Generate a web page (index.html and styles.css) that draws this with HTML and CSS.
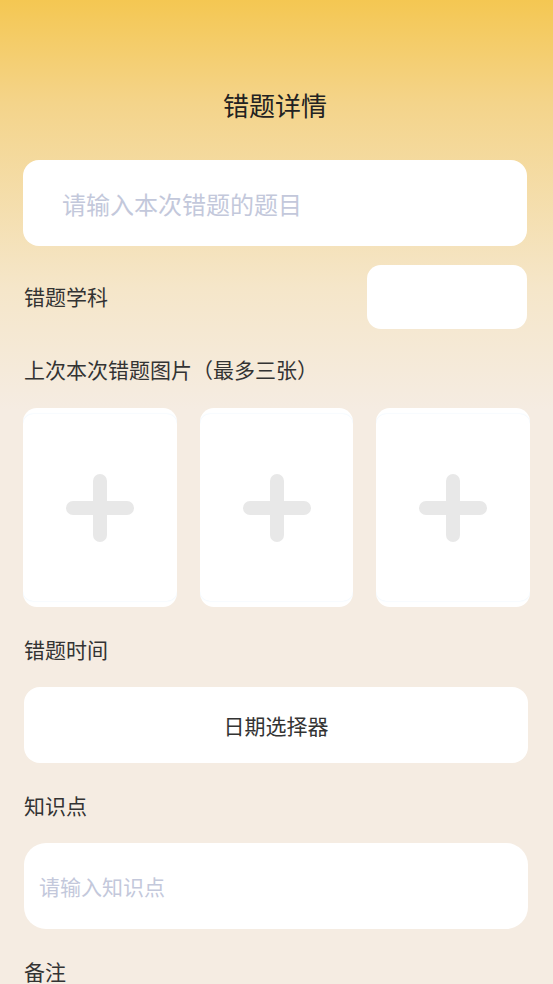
FILE: index.html
```html
<!DOCTYPE html>
<html lang="zh-CN">
<head>
  <meta charset="UTF-8">
  <meta name="viewport" content="width=device-width, initial-scale=1.0">
  <title>错题详情</title>
  <link rel="stylesheet" href="styles.css">
</head>
<body>
  <div class="page">
    <h1 class="title">错题详情</h1>

    <div class="field title-input">
      <span class="placeholder">请输入本次错题的题目</span>
    </div>

    <div class="subject-row">
      <span class="label">错题学科</span>
      <div class="subject-box"></div>
    </div>

    <div class="label section-label">上次本次错题图片（最多三张）</div>
    <div class="photos">
      <div class="photo"><div class="photo-inner"><span class="plus"></span></div></div>
      <div class="photo"><div class="photo-inner"><span class="plus"></span></div></div>
      <div class="photo"><div class="photo-inner"><span class="plus"></span></div></div>
    </div>

    <div class="label time-label">错题时间</div>
    <div class="date-picker">日期选择器</div>

    <div class="label point-label">知识点</div>
    <div class="point-input">
      <span class="placeholder small">请输入知识点</span>
    </div>

    <div class="label note-label">备注</div>
  </div>
</body>
</html>
```

FILE: styles.css
```css
html, body {
  margin: 0;
  padding: 0;
}
body {
  font-family: "Noto Sans CJK SC", "Noto Sans", sans-serif;
  color: #333;
  background: #f5ece2;
}
.page {
  min-height: 984px;
  padding: 0 26px 0 23px;
  box-sizing: border-box;
  background: linear-gradient(to bottom, #f4c752 0%, #f4d48a 25%, #f5e6c9 70%, #f5ece2 100%) no-repeat;
  background-size: 100% 410px;
  overflow: hidden;
}
.title {
  margin: 0;
  padding-top: 86px;
  height: 160px;
  box-sizing: border-box;
  text-align: center;
  font-size: 26px;
  font-weight: 400;
  line-height: 38px;
  color: #222;
}
.field {
  background: #fff;
  border-radius: 16px;
}
.title-input {
  height: 86px;
  display: flex;
  align-items: center;
  padding-left: 39px;
}
.placeholder {
  font-size: 24px;
  color: #c3c8db;
}
.placeholder.small {
  font-size: 21px;
}
.label {
  font-size: 21px;
  color: #333;
  line-height: 30px;
  padding-left: 1px;
}
.subject-row {
  display: flex;
  justify-content: space-between;
  align-items: center;
  margin-top: 19px;
  height: 64px;
}
.subject-row .label {
  margin-top: -2px;
}
.subject-box {
  width: 160px;
  height: 64px;
  background: #fff;
  border-radius: 14px;
}
.section-label {
  margin-top: 25px;
}
.photos {
  display: flex;
  gap: 23px;
  margin-top: 24px;
  margin-right: -3px;
}
.photo {
  flex: 1;
  height: 199px;
  background: #fff;
  border-radius: 14px;
  overflow: hidden;
}
.photo-inner {
  height: 187px;
  margin-top: 6px;
  border-radius: 10px;
  box-shadow: 0 0 2px 0 #e2f0fc;
  background: #fff;
  display: flex;
  align-items: center;
  justify-content: center;
}
.plus {
  position: relative;
  width: 68px;
  height: 68px;
}
.plus::before,
.plus::after {
  content: "";
  position: absolute;
  background: #e8e8e8;
  border-radius: 7px;
}
.plus::before {
  left: 0;
  top: 27px;
  width: 68px;
  height: 14px;
}
.plus::after {
  left: 27px;
  top: 0;
  width: 14px;
  height: 68px;
}
.time-label {
  margin-top: 27px;
}
.date-picker {
  margin-top: 23px;
  margin-left: 1px;
  margin-right: -1px;
  height: 76px;
  background: #fff;
  border-radius: 16px;
  display: flex;
  align-items: center;
  justify-content: center;
  font-size: 21px;
  color: #333;
}
.point-label {
  margin-top: 27px;
}
.point-input {
  margin-top: 23px;
  margin-left: 1px;
  margin-right: -1px;
  height: 86px;
  background: #fff;
  border-radius: 22px;
  display: flex;
  align-items: center;
  padding-left: 15px;
}
.note-label {
  margin-top: 27px;
}
```
